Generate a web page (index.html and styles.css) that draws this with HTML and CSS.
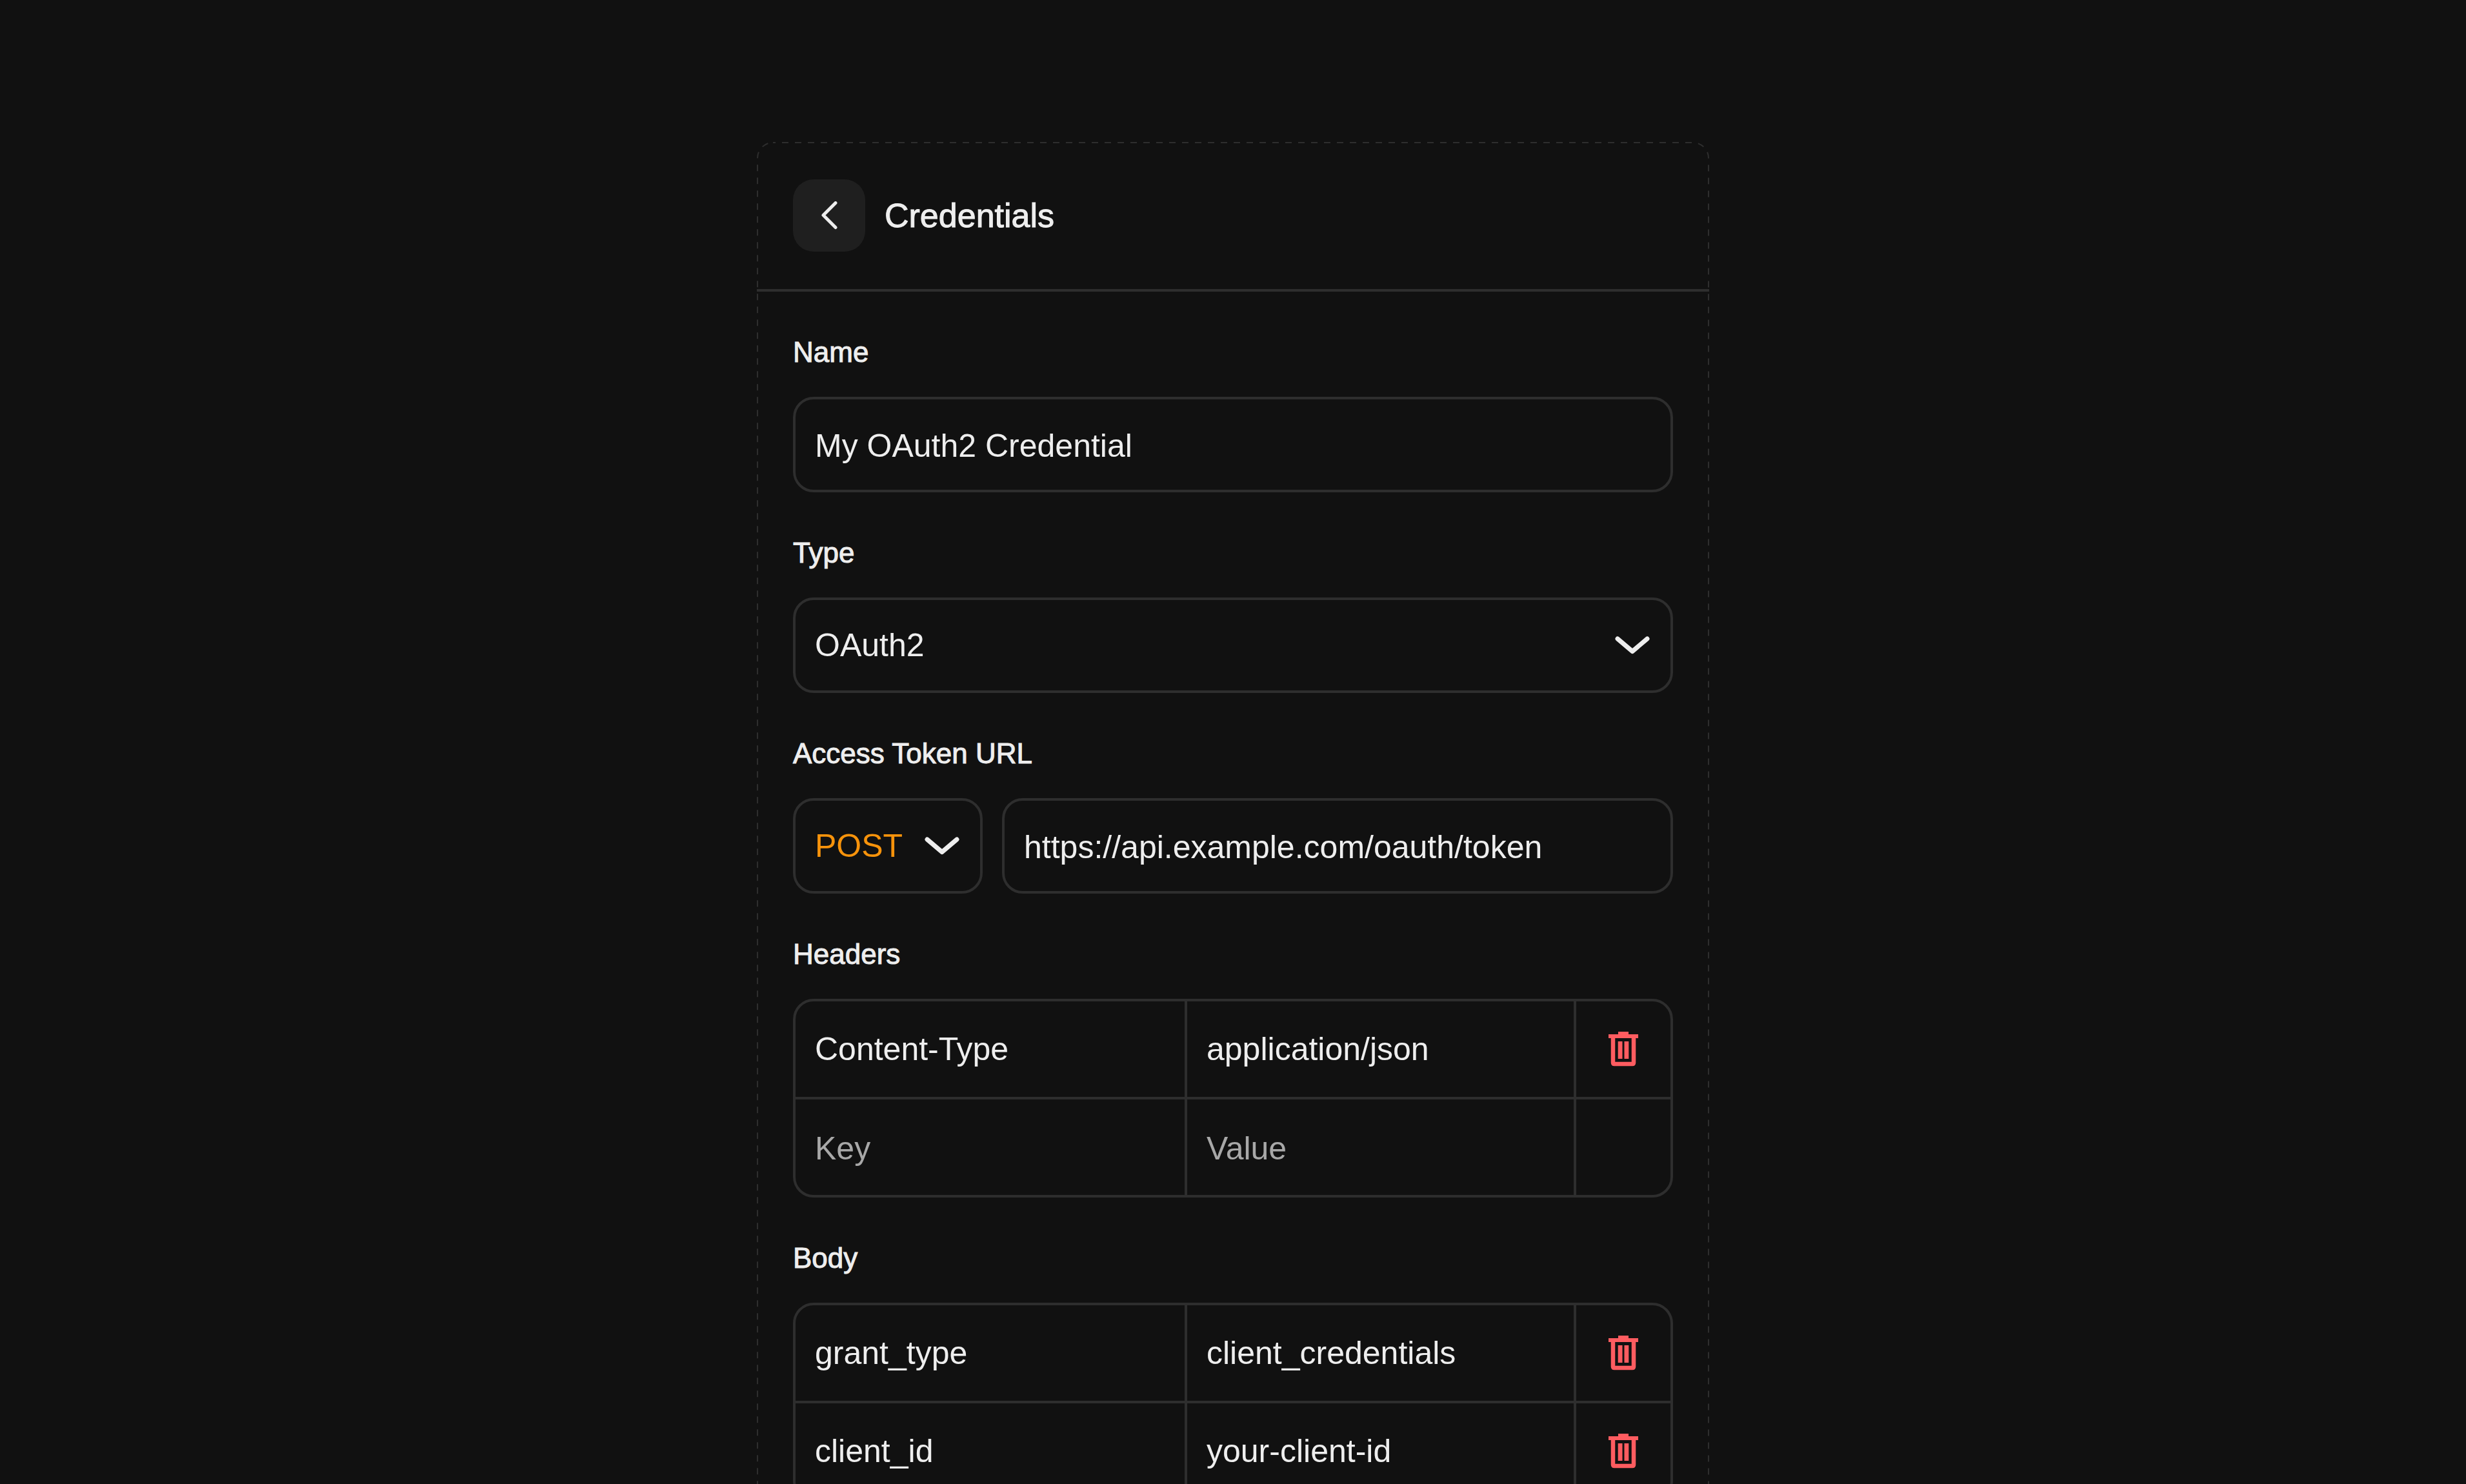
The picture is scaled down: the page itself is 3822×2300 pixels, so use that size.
FILE: index.html
```html
<!DOCTYPE html>
<html lang="en">
  <head>
    <meta charset="utf-8">
    <meta name="viewport" content="width=device-width, initial-scale=1">
    <title>Credentials</title>
    <link rel="stylesheet" href="styles.css">
  </head>
  <body>
    <!-- shared icons -->
    <svg class="sprite" aria-hidden="true">
      <symbol id="chevron" viewBox="0 0 54 28">
        <path d="M4 4L27 23.5L50 4" fill="none" stroke="currentColor" stroke-width="7" stroke-linecap="round" stroke-linejoin="round"/>
      </symbol>
      <symbol id="trash" viewBox="0 0 46 54">
        <path d="M15 0H31V4H46V10H0V4H15Z" fill="currentColor"/>
        <path d="M7 8V48Q7 50 9 50H37Q39 50 39 48V8" fill="none" stroke="currentColor" stroke-width="6.5"/>
        <path d="M14.7 15H21.5V42H14.7ZM24.5 15H31.3V42H24.5Z" fill="currentColor"/>
      </symbol>
    </svg>

    <main class="card">
      <svg class="outline" aria-hidden="true"><rect x="1" y="1" rx="24"/></svg>

      <header class="card-header">
        <button class="back" type="button" aria-label="Back">
          <svg width="26" height="44" viewBox="0 0 26 44"><path d="M23 2.5L4 21.5L23 40.5" fill="none" stroke="currentColor" stroke-width="5" stroke-linecap="round" stroke-linejoin="round"/></svg>
        </button>
        <h1>Credentials</h1>
      </header>

      <form class="fields">
        <div class="field">
          <label for="name">Name</label>
          <input class="box" id="name" type="text" value="My OAuth2 Credential">
        </div>

        <div class="field">
          <label for="type">Type</label>
          <div class="select">
            <select class="box" id="type">
              <option>OAuth2</option>
            </select>
            <svg class="chevron"><use href="#chevron"/></svg>
          </div>
        </div>

        <div class="field">
          <label for="url">Access Token URL</label>
          <div class="url-row">
            <div class="select method">
              <select class="box" aria-label="Method">
                <option>POST</option>
              </select>
              <svg class="chevron"><use href="#chevron"/></svg>
            </div>
            <input class="box" id="url" type="text" value="https://api.example.com/oauth/token">
          </div>
        </div>

        <div class="field">
          <h2 id="headers-label">Headers</h2>
          <div class="table-box">
            <table aria-labelledby="headers-label">
              <tbody>
                <tr>
                  <td>Content-Type</td>
                  <td>application/json</td>
                  <td class="action"><button type="button" aria-label="Delete"><svg class="trash"><use href="#trash"/></svg></button></td>
                </tr>
                <tr>
                  <td><input type="text" placeholder="Key" aria-label="Key"></td>
                  <td><input type="text" placeholder="Value" aria-label="Value"></td>
                  <td class="action"></td>
                </tr>
              </tbody>
            </table>
          </div>
        </div>

        <div class="field">
          <h2 id="body-label">Body</h2>
          <div class="table-box">
            <table aria-labelledby="body-label">
              <tbody>
                <tr>
                  <td>grant_type</td>
                  <td>client_credentials</td>
                  <td class="action"><button type="button" aria-label="Delete"><svg class="trash"><use href="#trash"/></svg></button></td>
                </tr>
                <tr>
                  <td>client_id</td>
                  <td>your-client-id</td>
                  <td class="action"><button type="button" aria-label="Delete"><svg class="trash"><use href="#trash"/></svg></button></td>
                </tr>
              </tbody>
            </table>
          </div>
        </div>
      </form>
    </main>
  </body>
</html>
```
FILE: styles.css
```css
* {
  box-sizing: border-box;
}

body {
  margin: 0;
  height: 100vh;
  overflow: hidden;
  padding-top: 220px;
  background: #111;
  color: #eee;
  font-family: "Liberation Sans", Arial, sans-serif;
  font-size: 50px;
}

input, select, button {
  font: inherit;
  color: inherit;
}

h1, h2 {
  margin: 0;
}

.sprite {
  display: block;
  width: 0;
  height: 0;
}

.card {
  position: relative;
  width: 100%;
  max-width: 1476px;
  margin: 0 auto;
}

/* dashed frame, css dashes are too short */
.outline {
  position: absolute;
  inset: 0;
  width: 100%;
  height: 100%;
  pointer-events: none;
}

.outline rect {
  width: calc(100% - 2px);
  height: calc(100% - 2px);
  fill: none;
  stroke: #2e2e2e;
  stroke-width: 2;
  stroke-dasharray: 10 10;
  stroke-dashoffset: 6;
}

.card-header {
  display: flex;
  align-items: center;
  gap: 30px;
  padding: 58px 56px;
  border-bottom: 4px solid #2e2e2e;
}

.card-header h1 {
  font-size: 52px;
  font-weight: 400;
  -webkit-text-stroke: 1px;
}

.back {
  display: flex;
  align-items: center;
  justify-content: center;
  width: 112px;
  height: 112px;
  padding: 0;
  border: 0;
  border-radius: 32px;
  background: #1f1f1f;
}

.fields {
  display: flex;
  flex-direction: column;
  gap: 68px;
  padding: 68px 56px;
}

.field {
  display: flex;
  flex-direction: column;
  gap: 44px;
}

.field label, .field h2 {
  font-size: 44px;
  font-weight: 400;
  line-height: 51px;
  -webkit-text-stroke: 1px;
}

.box {
  width: 100%;
  height: 148px;
  padding: 0 30px;
  border: 4px solid #2e2e2e;
  border-radius: 32px;
  background: transparent;
  outline: none;
}

input.box {
  padding-top: 4px;
}

.select {
  position: relative;
}

.select select {
  display: block;
  appearance: none;
}

.chevron {
  position: absolute;
  top: 60px;
  right: 36px;
  width: 54px;
  height: 28px;
  pointer-events: none;
}

.url-row {
  display: flex;
  gap: 30px;
}

.url-row > input {
  flex: 1;
  min-width: 0;
}

.method {
  width: 294px;
}

.method select {
  color: #f7930b;
}

.table-box {
  border: 4px solid #2e2e2e;
  border-radius: 32px;
  overflow: hidden;
}

table {
  width: 100%;
  table-layout: fixed;
  border-spacing: 0;
}

td {
  height: 148px;
  padding: 0 30px;
}

tr + tr td {
  height: 152px;
  border-top: 4px solid #2e2e2e;
}

td + td {
  border-left: 4px solid #2e2e2e;
}

td input {
  display: block;
  width: 100%;
  padding: 4px 0 0;
  border: 0;
  background: transparent;
  outline: none;
}

td input::placeholder {
  color: #a8a8a8;
}

.action {
  width: 150px;
  padding: 0;
}

.action button {
  display: block;
  margin: 0 auto;
  padding: 0;
  border: 0;
  background: transparent;
  color: #ff5c60;
}

.trash {
  display: block;
  width: 46px;
  height: 54px;
}
```
